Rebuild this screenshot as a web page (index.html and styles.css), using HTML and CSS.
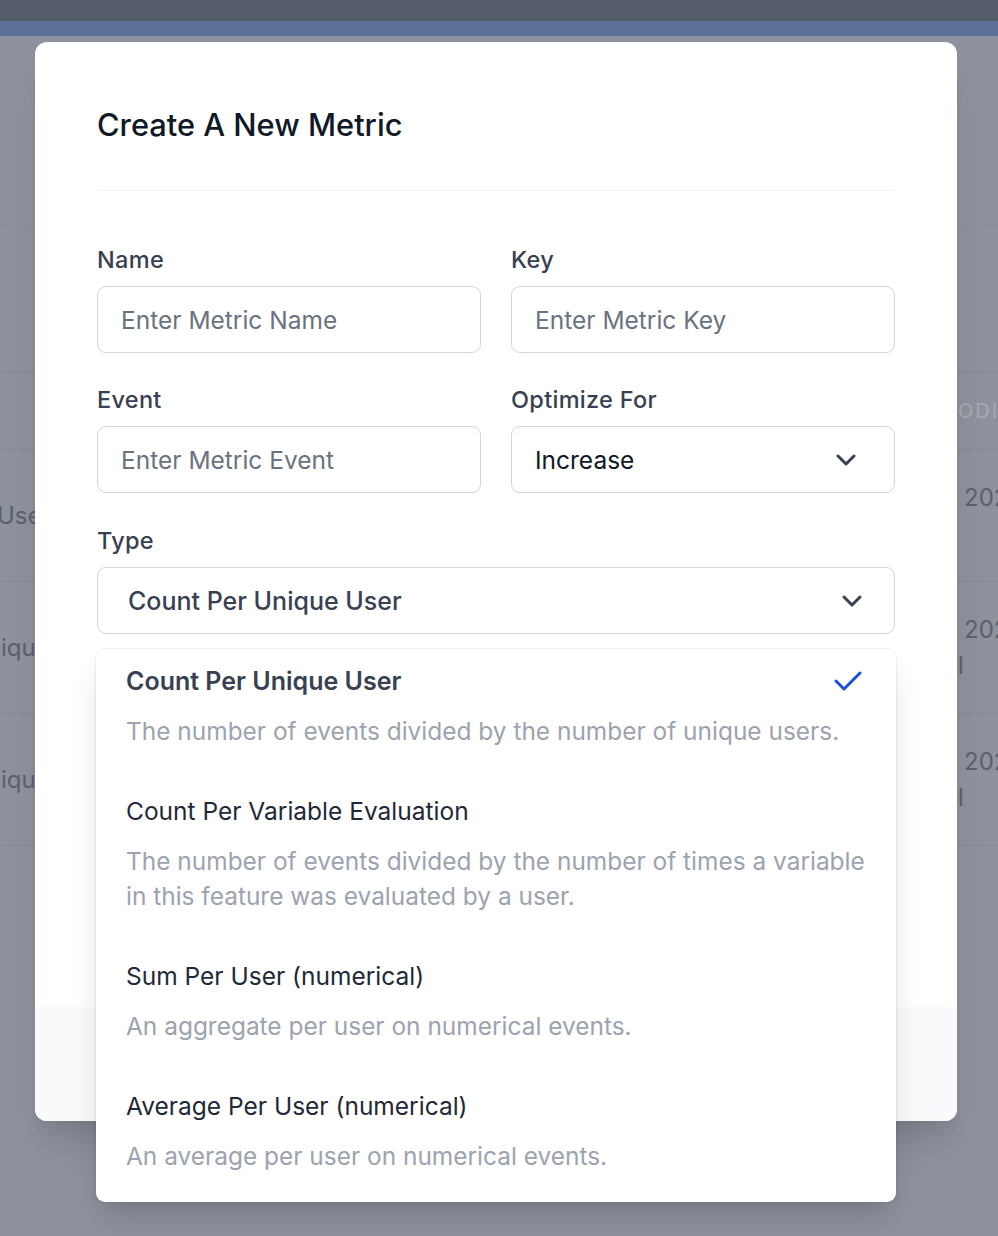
FILE: index.html
```html
<!DOCTYPE html>
<html lang="en">
<head>
<meta charset="utf-8">
<title>Create A New Metric</title>
<link rel="stylesheet" href="styles.css">
</head>
<body>
<div class="page">
  <div class="topbar"></div>
  <div class="navbar"></div>
  <div class="page-header"></div>
  <div class="table">
    <div class="trow thead">
      <div class="cell first"></div>
      <div class="cell last"><span class="head-text">Modified</span></div>
    </div>
    <div class="trow">
      <div class="cell first"><span class="shift-a">User</span></div>
      <div class="cell last"><span class="date">2023-01-12</span><span class="by far">by admin</span></div>
    </div>
    <div class="trow">
      <div class="cell first"><span class="shift-b">Unique User</span></div>
      <div class="cell last"><span class="date">2023-01-10</span><span class="by">l</span></div>
    </div>
    <div class="trow">
      <div class="cell first"><span class="shift-b">Unique User</span></div>
      <div class="cell last"><span class="date">2023-01-09</span><span class="by">l</span></div>
    </div>
  </div>
</div>

<div class="modal">
  <div class="modal-body">
    <h1 class="modal-title">Create A New Metric</h1>
    <div class="form">
      <div class="grid">
        <div class="field">
          <label class="label">Name</label>
          <div class="input placeholder">Enter Metric Name</div>
        </div>
        <div class="field">
          <label class="label">Key</label>
          <div class="input placeholder">Enter Metric Key</div>
        </div>
        <div class="field">
          <label class="label">Event</label>
          <div class="input placeholder">Enter Metric Event</div>
        </div>
        <div class="field">
          <label class="label">Optimize For</label>
          <div class="input select small-select">
            <span class="value">Increase</span>
            <svg class="chev" width="20" height="14" viewBox="0 0 20 14"><polyline points="2,3 10,11 18,3" fill="none" stroke="#374151" stroke-width="3" stroke-linecap="round" stroke-linejoin="round"/></svg>
          </div>
        </div>
      </div>
      <div class="field type-field">
        <label class="label">Type</label>
        <div class="select-wrap">
          <div class="input select type-select">
            <span class="value strong">Count Per Unique User</span>
            <svg class="chev" width="20" height="14" viewBox="0 0 20 14"><polyline points="2,3 10,11 18,3" fill="none" stroke="#374151" stroke-width="3" stroke-linecap="round" stroke-linejoin="round"/></svg>
          </div>
          <ul class="listbox">
            <li class="option selected">
              <div class="opt-head">
                <span class="opt-title">Count Per Unique User</span>
                <svg class="check" width="30" height="22" viewBox="0 0 30 22"><polyline points="3,11 11,19 27,3" fill="none" stroke="#1d4ed8" stroke-width="3" stroke-linecap="round" stroke-linejoin="round"/></svg>
              </div>
              <p class="opt-desc">The number of events divided by the number of unique users.</p>
            </li>
            <li class="option">
              <div class="opt-head"><span class="opt-title">Count Per Variable Evaluation</span></div>
              <p class="opt-desc">The number of events divided by the number of times a variable in this feature was evaluated by a user.</p>
            </li>
            <li class="option">
              <div class="opt-head"><span class="opt-title">Sum Per User (numerical)</span></div>
              <p class="opt-desc">An aggregate per user on numerical events.</p>
            </li>
            <li class="option last-option">
              <div class="opt-head"><span class="opt-title">Average Per User (numerical)</span></div>
              <p class="opt-desc">An average per user on numerical events.</p>
            </li>
          </ul>
        </div>
      </div>
    </div>
  </div>
  <div class="modal-footer"></div>
</div>
</body>
</html>
```
FILE: styles.css
```css
* { box-sizing: border-box; }
html, body { margin: 0; padding: 0; }
body {
  width: 998px;
  height: 1236px;
  overflow: hidden;
  position: relative;
  background: #8e929d;
  font-family: Inter, "Noto Sans", "Liberation Sans", sans-serif;
}

/* ---------- background page (already dimmed by the backdrop) ---------- */
.page { width: 998px; overflow: hidden; }
.topbar { height: 21px; background: #545b6a; }
.navbar { height: 15px; background: #5b6f97; }
.page-header { height: 191px; border-bottom: 1px solid #898d98; }
.table { margin-top: 145px; border-top: 1px solid #868a95; }
.trow {
  display: grid;
  grid-template-columns: 962px 36px;
  height: 132px;
  border-bottom: 1px solid #868a95;
  font-size: 24px;
  color: #5b606d;
}
.trow.thead { height: 77px; }
.cell { display: flex; flex-direction: column; justify-content: center; white-space: nowrap; overflow: hidden; }
.shift-a { margin-left: -3px; }
.shift-b { margin-left: -31px; }
.cell.last { padding-left: 2px; line-height: 36px; overflow: visible; }
.head-text {
  margin-left: -26px;
  text-transform: uppercase;
  letter-spacing: 2px;
  font-size: 20px;
  color: #a7aab3;
}
.by { margin-left: -6px; }
.by.far { margin-left: 60px; }

/* ---------- modal ---------- */
.modal {
  position: absolute;
  left: 35px;
  top: 42px;
  width: 922px;
  background: #fff;
  border-radius: 12px;
  box-shadow: 0 30px 38px -8px rgba(0,0,0,0.12), 0 12px 15px -6px rgba(0,0,0,0.06);
}
.modal-body {
  padding: 62px 62px 0;
  height: 965px;
}
.modal-title {
  margin: 0;
  font-size: 30.8px;
  line-height: 42px;
  font-weight: 500;
  color: #111827;
  padding-bottom: 44px;
  border-bottom: 1px solid #f1f2f4;
}
.form { padding-top: 53px; }
.grid {
  display: grid;
  grid-template-columns: 1fr 1fr;
  column-gap: 30px;
  row-gap: 31px;
}
.field { display: flex; flex-direction: column; }
.type-field { margin-top: 32px; }
.label {
  font-size: 23.5px;
  line-height: 32px;
  font-weight: 500;
  letter-spacing: 0.3px;
  color: #374151;
  margin-bottom: 10px;
}
.input {
  height: 67px;
  border: 1px solid #d1d5db;
  border-radius: 9px;
  padding: 0 23px;
  display: flex;
  align-items: center;
  font-size: 24.5px;
  color: #111827;
}
.placeholder { color: #6b7280; }
.select { justify-content: space-between; }
.small-select { padding-right: 38px; }
.type-select { padding-left: 30px; padding-right: 32px; }
.value.strong { font-weight: 500; color: #374151; font-size: 25px; }

.select-wrap { position: relative; }
.listbox {
  position: absolute;
  left: -1px;
  right: -1px;
  top: 82px;
  margin: 0;
  padding: 0;
  list-style: none;
  background: #fff;
  border-radius: 9px;
  box-shadow: 0 0 0 1px rgba(0,0,0,0.05), 0 22px 34px -6px rgba(0,0,0,0.14), 0 8px 12px -4px rgba(0,0,0,0.06);
  z-index: 2;
}
.option { padding: 17px 30px 30px; }
.option.last-option { padding-bottom: 28px; }
.opt-head {
  display: flex;
  justify-content: space-between;
  align-items: center;
  height: 30px;
}
.opt-title { font-size: 24.5px; color: #1f2937; }
.selected .opt-title { font-weight: 600; color: #374151; font-size: 25px; }
.check { margin-right: 3px; }
.opt-desc {
  margin: 18px 0 0;
  font-size: 24.45px;
  line-height: 35px;
  color: #9ca3af;
}

.modal-footer {
  height: 114px;
  background: #f9fafb;
  border-radius: 0 0 12px 12px;
}
```
